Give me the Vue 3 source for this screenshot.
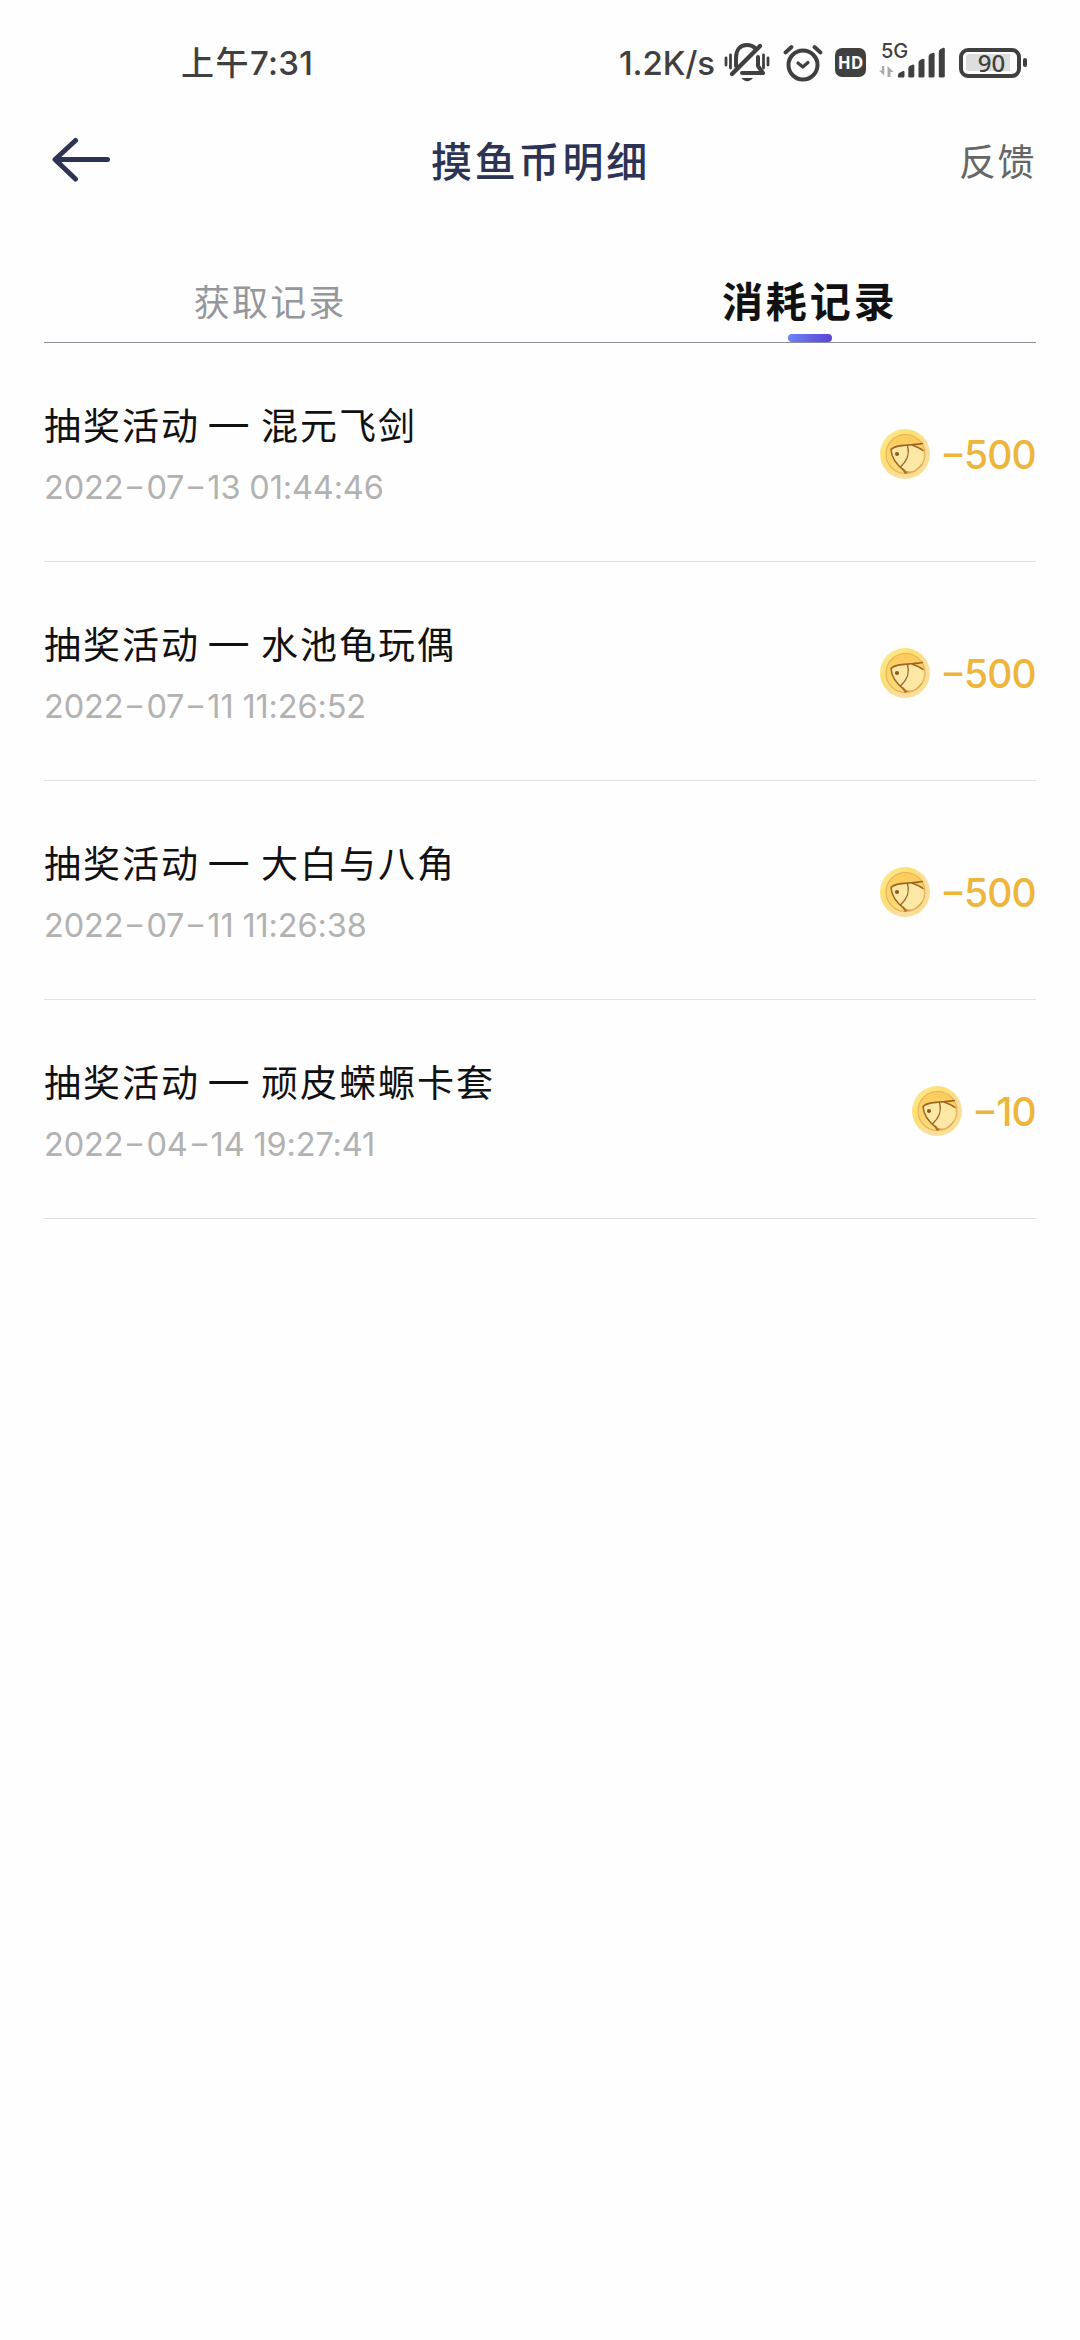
<script setup>
const records = [
  { title: '抽奖活动', prize: '混元飞剑', time: '2022-07-13 01:44:46', amount: 500 },
  { title: '抽奖活动', prize: '水池龟玩偶', time: '2022-07-11 11:26:52', amount: 500 },
  { title: '抽奖活动', prize: '大白与八角', time: '2022-07-11 11:26:38', amount: 500 },
  { title: '抽奖活动', prize: '顽皮蝾螈卡套', time: '2022-04-14 19:27:41', amount: 10 },
]
const pieces = (time) => time.split(/(-)/)
</script>

<template>
  <div class="screen">
    <div class="status">
      <span class="clock"><span class="cn">上午</span>7:31</span>
      <div class="indicators">
        <span class="speed">1.2K/s</span>
        <svg class="mute" width="46" height="42" viewBox="0 0 46 42" fill="none" stroke="#404040" stroke-linecap="round" stroke-linejoin="round">
          <path d="M2 16v7M6.500 13v13M39.500 13v13M44 16v7" stroke-width="2.800" />
          <path d="M12 24V16C12 8 16 3 23 3C26 3 29 4 31 6" stroke-width="4" />
          <path d="M34 15V24L39 31H18" stroke-width="4" />
          <path d="M36 4L8 32" stroke-width="4.400" />
          <path d="M17.500 36H29C27.500 38 25.500 39.200 23.200 39.200S19 38 17.500 36Z" fill="#404040" stroke="none" />
        </svg>
        <svg class="alarm" width="40" height="38" viewBox="0 0 40 38" fill="none" stroke="#404040" stroke-linecap="round" stroke-linejoin="round">
          <circle cx="20" cy="21" r="14.500" stroke-width="4" />
          <path d="M15 19L19.800 23L25 18.500" stroke-width="3.200" />
          <path d="M2.500 8.500L8.500 3M37.500 8.500L31.500 3" stroke-width="3.800" />
        </svg>
        <span class="hd">HD</span>
        <div class="signal">
          <span class="net">5G</span>
          <svg width="68" height="32" viewBox="0 0 68 32">
            <path d="M6.300 19V28.500L1 23.500H4V19ZM9.500 30V19L15.500 25H12.500V30Z" fill="#aaa" />
            <g fill="#404040">
              <path d="M20 30.500V28Q20 26 22 25.400L25 24Q26.500 23.700 26.500 25V29Q26.500 30.500 25 30.500Z" />
              <path d="M30.300 30V21.500Q30.300 19.500 32 18.700L35 17.500Q36.300 17.300 36.300 19V29Q36.300 30.500 34.500 30.500H31.500Z" />
              <path d="M40.500 30V16Q40.500 14 42 13L45 11.700Q46.500 11.500 46.500 13V29Q46.500 30.500 45 30.500H41.500Z" />
              <path d="M50.600 30V10Q50.600 8 52 7L55 5.700Q56.600 5.500 56.600 7V29Q56.600 30.500 55 30.500H51.500Z" />
              <path d="M60.800 30V5Q60.800 3 62.500 2L65.500.8Q66.800.5 66.800 2V29Q66.800 30.500 65.500 30.500H62Z" />
            </g>
          </svg>
        </div>
        <div class="battery"><span class="level">90</span></div>
        <i class="nub"></i>
      </div>
    </div>

    <header class="nav">
      <svg class="back" width="60" height="46" viewBox="0 0 60 46" fill="none" stroke="#2c3354" stroke-width="5" stroke-linecap="round" stroke-linejoin="round">
        <path d="M24.500 3.500L4 22.500L24.500 42M5 22.500H56.500" />
      </svg>
      <h1>摸鱼币明细</h1>
      <span class="feedback">反馈</span>
    </header>

    <nav class="tabs">
      <div class="tab">获取记录</div>
      <div class="tab active">消耗记录</div>
    </nav>

    <ul class="list">
      <li v-for="r in records" :key="r.time + r.prize">
        <div class="info">
          <div class="name"><span>{{ r.title }}</span><span class="dash">一</span><span>{{ r.prize }}</span></div>
          <div class="time"><span v-for="(p, i) in pieces(r.time)" :key="i" :class="{ hyphen: p === '-' }">{{ p }}</span></div>
        </div>
        <div class="amount">
          <svg class="coin" width="52" height="52" viewBox="0 0 52 52">
            <defs>
              <linearGradient id="rim" x1="0" y1="0" x2="1" y2="1">
                <stop offset="0" stop-color="#fdec96" />
                <stop offset=".35" stop-color="#fbdf74" />
                <stop offset=".65" stop-color="#f9dea0" />
                <stop offset="1" stop-color="#fae08a" />
              </linearGradient>
              <linearGradient id="face" x1="0" y1="0" x2="0" y2="1">
                <stop offset="0" stop-color="#fbcb5c" />
                <stop offset="1" stop-color="#fcdc7c" />
              </linearGradient>
            </defs>
            <circle cx="26" cy="26" r="25" fill="url(#rim)" />
            <circle cx="26.500" cy="26" r="19.500" fill="url(#face)" stroke="#e9b452" stroke-width="1.200" />
            <path d="M12 21.500C18 17 27 16.500 34 17L44 22.500C46 31 42 41 33 44.500L25 42.500C18 38 13 30 12 21.500Z" fill="#fde7a4" />
            <g fill="none" stroke="#9c6425" stroke-width="1.500" stroke-linecap="round" stroke-linejoin="round">
              <path d="M43.500 15.500C35 17.500 17 15.500 12 21.500C12.500 31 18 37 25 42.500" />
              <path d="M28.500 17.500C31 27 28 33 21.500 39" />
              <path d="M33 17C37 18.500 41 20 44 22.500" />
            </g>
            <path d="M22.500 40.500L26 46L30 44Q26 43 24 40Z" fill="#a86e2a" />
            <path d="M27 43.500Q35 46.500 43 36" fill="none" stroke="#dda64c" stroke-width="1.200" />
            <circle cx="18" cy="26" r="2.100" fill="#8f5a22" />
          </svg>
          <span class="num"><span class="minus">-</span>{{ r.amount }}</span>
        </div>
      </li>
    </ul>
  </div>
</template>

<style>
body {
  margin: 0;
  background: #fefefe;
}
</style>

<style scoped>
.screen {
  width: 1080px;
  height: 2340px;
  background: #fefefe;
  font-family: Inter, "Noto Sans CJK SC", sans-serif;
  overflow: hidden;
}
.status {
  display: flex;
  align-items: center;
  justify-content: space-between;
  height: 125px;
  padding: 0 53px 0 181px;
  color: #404040;
  font-size: 33px;
  font-weight: 500;
}
.clock {
  display: flex;
  align-items: center;
  letter-spacing: 0.3px;
}
.cn {
  margin-top: -3px;
  font-family: "Noto Sans CJK SC", sans-serif;
  letter-spacing: 1.5px;
}
.speed {
  letter-spacing: -0.1px;
}
.indicators {
  display: flex;
  align-items: center;
}
.mute {
  margin-left: 9px;
}
.alarm {
  margin-left: 13px;
}
.hd {
  width: 31px;
  height: 29px;
  margin-left: 12px;
  border-radius: 7px;
  background: #404040;
  color: #fefefe;
  font: 700 17px/29px "Open Sans", sans-serif;
  text-align: center;
}
.signal {
  position: relative;
  width: 68px;
  height: 32px;
  margin-left: 12px;
}
.signal svg {
  display: block;
}
.net {
  position: absolute;
  left: 3px;
  top: -8px;
  font-size: 20px;
  line-height: 24px;
}
.battery {
  display: flex;
  box-sizing: border-box;
  width: 62px;
  height: 30px;
  margin-left: 13px;
  padding: 2.500px 3px;
  border: 4px solid #404040;
  border-radius: 9px;
}
.level {
  flex: 1;
  border-radius: 3px;
  background: linear-gradient(90deg, #dedede 92%, transparent 92%);
  font: 500 24px/17px "Noto Sans", sans-serif;
  text-align: center;
  text-indent: 3px;
}
.nub {
  width: 4px;
  height: 9px;
  margin-left: 2px;
  border-radius: 2px;
  background: #404040;
}
.nav {
  display: grid;
  grid-template-columns: 200px 1fr 200px;
  align-items: center;
  height: 70px;
  padding: 0 44px 0 51px;
  font-family: "Noto Sans CJK SC", sans-serif;
}
h1 {
  margin: -2px 6px 0 0;
  color: #2c3354;
  font-size: 41px;
  font-weight: 500;
  letter-spacing: 2.800px;
  text-align: center;
}
.feedback {
  color: #666;
  font-size: 37px;
  letter-spacing: 1.500px;
  text-align: right;
}
.tabs {
  display: flex;
  height: 77px;
  margin: 70px 44px 0;
  border-bottom: 1px solid #8e8f96;
}
.tab {
  position: relative;
  flex: 1;
  margin-right: 42px;
  color: #96979d;
  font: 400 36px/70px "Noto Sans CJK SC", sans-serif;
  letter-spacing: 2.200px;
  text-align: center;
}
.tab.active {
  margin: 0 0 0 45px;
  color: #111;
  font-size: 41px;
  line-height: 69px;
  font-weight: 700;
  letter-spacing: 2.900px;
}
.tab.active::after {
  content: "";
  position: absolute;
  left: 50%;
  bottom: 0;
  width: 44px;
  height: 8px;
  margin-left: -22px;
  border-radius: 4px;
  background: linear-gradient(90deg, #6a83f6, #5d43d6);
}
.list {
  margin: 0 44px;
  padding: 0;
  list-style: none;
}
li {
  display: flex;
  justify-content: space-between;
  box-sizing: border-box;
  height: 219px;
  padding-top: 53px;
  border-bottom: 1px solid #e2e2e2;
}
.name {
  display: flex;
  height: 56px;
  color: #111;
  font: 400 37px/56px "Noto Sans CJK SC", sans-serif;
  letter-spacing: 2px;
}
.dash {
  width: 37px;
  margin: 0 14px 0 10px;
  letter-spacing: 0;
  transform: scaleX(1.14);
}
.time {
  margin-top: 16px;
  color: #b2b2b2;
  font-size: 32.500px;
  line-height: 40px;
  letter-spacing: -0.150px;
  white-space: pre;
}
.hyphen {
  display: inline-block;
  width: 23px;
  text-align: center;
  transform: translateY(-1.500px) scaleX(1.45);
}
.amount {
  display: flex;
  align-items: center;
  height: 116px;
}
.num {
  margin-left: 10px;
  color: #edb53b;
  font-size: 39px;
  font-weight: 450;
  letter-spacing: -0.800px;
}
.minus {
  display: inline-block;
  width: 23px;
  text-align: center;
  transform: translateY(-2px) scaleX(1.45);
}
</style>
